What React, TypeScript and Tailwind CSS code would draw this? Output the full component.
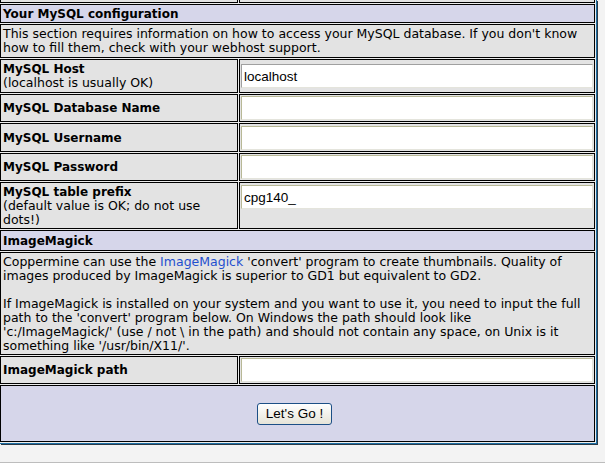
import type { ReactNode } from "react";

const cellGray = "bg-[#e3e3e3]";
const cellBlue = "bg-[#d6d6ea]";

function Field({ value = "", first = false }: { value?: string; first?: boolean }) {
  return (
    <input
      type="text"
      defaultValue={value}
      className={`h-[24px] w-full bg-white px-[2px] text-[13.5px] text-black font-['Liberation_Sans',Arial,sans-serif] outline-none border ${
        first ? "border-t-[#a0a0a0] border-l-[#a0a0a0]" : "border-t-[#b8b896] border-l-[#b8b896]"
      } border-r-[#e4e4dc] border-b-[#e4e4dc]`}
    />
  );
}

function Row({
  h,
  label,
  children,
  top = false,
}: {
  h: string;
  label: ReactNode;
  children: ReactNode;
  top?: boolean;
}) {
  return (
    <div className={`flex gap-px ${h}`}>
      <div className={`w-[238px] shrink-0 border border-black ${cellGray} px-[2px] flex items-center leading-[14px]`}>
        <div className="whitespace-nowrap">{label}</div>
      </div>
      <div
        className={`flex-1 border border-black ${cellGray} px-px flex ${
          top ? "items-start pt-[2px]" : "items-center"
        }`}
      >
        {children}
      </div>
    </div>
  );
}

function Label({ children }: { children: ReactNode }) {
  return <b className="text-[12px]">{children}</b>;
}

function Header({ children, h }: { children: ReactNode; h: string }) {
  return (
    <div className={`${h} border border-black ${cellBlue} px-[2px] pt-px flex items-center font-bold text-[12px]`}>
      {children}
    </div>
  );
}

function Text({ children, h }: { children: ReactNode; h: string }) {
  return (
    <div className={`${h} border border-black ${cellGray} px-[2px] pt-[2px] leading-[14px] whitespace-nowrap`}>
      {children}
    </div>
  );
}

export default function App() {
  return (
    <div className="h-[463px] bg-[#f3f3f3] border-b border-[#bdbdbd] text-[12.5px] text-black font-['DejaVu_Sans',Verdana,sans-serif]">
      <div className="w-[597px] flex flex-col gap-px border-r border-b border-[#1d6fa5] pr-px pb-px shadow-[1px_1px_0_#2a3a48] bg-[#ececec]">
        {/* tail of the row above */}
        <div className="flex gap-px h-[3px]">
          <div className={`w-[238px] border-x border-b border-black ${cellGray}`} />
          <div className={`flex-1 border-x border-b border-black ${cellGray}`} />
        </div>

        <Header h="h-[19px]">Your MySQL configuration</Header>
        <Text h="h-[34px]">
          This section requires information on how to access your MySQL database. If you don't know
          <br />
          how to fill them, check with your webhost support.
        </Text>

        <Row
          h="h-[34px]"
          label={
            <>
              <Label>MySQL Host</Label>
              <br />
              (localhost is usually OK)
            </>
          }
        >
          <Field value="localhost" first />
        </Row>
        <Row h="h-[28px]" label={<Label>MySQL Database Name</Label>}>
          <Field />
        </Row>
        <Row h="h-[29px]" label={<Label>MySQL Username</Label>}>
          <Field />
        </Row>
        <Row h="h-[28px]" label={<Label>MySQL Password</Label>}>
          <Field />
        </Row>
        <Row
          h="h-[47px]"
          top
          label={
            <>
              <Label>MySQL table prefix</Label>
              <br />
              (default value is OK; do not use
              <br />
              dots!)
            </>
          }
        >
          <Field value="cpg140_" />
        </Row>

        <Header h="h-[21px]">ImageMagick</Header>
        <Text h="h-[103px]">
          Coppermine can use the <span className="text-[#1f4fcf]">ImageMagick</span> 'convert' program to create
          thumbnails. Quality of
          <br />
          images produced by ImageMagick is superior to GD1 but equivalent to GD2.
          <br />
          <br />
          If ImageMagick is installed on your system and you want to use it, you need to input the full
          <br />
          path to the 'convert' program below. On Windows the path should look like
          <br />
          {"'c:/ImageMagick/' (use / not \\ in the path) and should not contain any space, on Unix is it"}
          <br />
          something like '/usr/bin/X11/'.
        </Text>

        <Row h="h-[28px]" label={<Label>ImageMagick path</Label>}>
          <Field />
        </Row>

        <div className={`h-[57px] border border-black ${cellBlue} flex items-center justify-center pt-px`}>
          <button
            type="button"
            className="h-[22px] px-[8px] ml-[-6px] rounded-[3px] border border-[#1c4f86] bg-gradient-to-b from-white to-[#e6e4d8] text-[13.5px] text-black font-['Liberation_Sans',Arial,sans-serif] leading-none"
          >
            Let's Go !
          </button>
        </div>
      </div>
    </div>
  );
}
